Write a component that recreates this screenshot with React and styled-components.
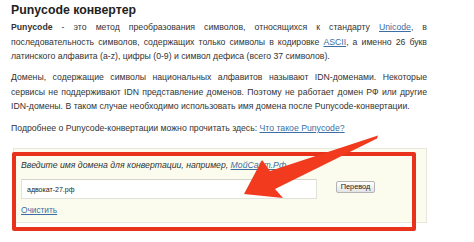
import React from "react";
import styled, { createGlobalStyle } from "styled-components";

const Global = createGlobalStyle`
  html, body { margin: 0; padding: 0; background: #fff; }
  body { font-family: "Liberation Sans", Arial, sans-serif; color: #333; }
`;

const Page = styled.div`
  position: relative;
  width: 474px;
  height: 242px;
  overflow: hidden;
  padding: 2px 47px 0 11px;
  box-sizing: border-box;
`;

const Title = styled.h1`
  margin: 0 0 1px;
  font-size: 12.3px;
  line-height: 17px;
  font-weight: bold;
  color: #222;
`;

const Para = styled.p`
  margin: 0 0 ${(p) => p.$gap ?? 6.5}px;
  font-size: 8.7px;
  line-height: 14.5px;
  text-align: justify;
  color: #333;
`;

const Link = styled.a`
  color: #3c6ea3;
  text-decoration: underline;
`;

const FormBox = styled.div`
  margin: 12px 0 0 2px;
  width: 414px;
  height: 75px;
  box-sizing: border-box;
  background: #fcfcee;
  border: 1px solid #e6e6dc;
  padding: 10px 0 0 7px;
`;

const Hint = styled.div`
  font-size: 8.7px;
  font-style: italic;
  color: #333;
  line-height: 12px;
`;

const Row = styled.div`
  display: flex;
  align-items: center;
  margin-top: 8px;
`;

const Input = styled.div`
  width: 296px;
  height: 20px;
  box-sizing: border-box;
  background: #fff;
  border: 1px solid #e2e2da;
  border-top-color: #d4d4cc;
  font-size: 7px;
  line-height: 19px;
  padding-left: 5px;
  color: #222;
`;

const Button = styled.div`
  margin: 0 0 3px 19px;
  width: 39px;
  height: 12px;
  box-sizing: border-box;
  border: 1px solid #b5b5b5;
  border-radius: 2px;
  background: linear-gradient(#ffffff, #e4e4e4);
  font-size: 7.4px;
  line-height: 10px;
  text-align: center;
  color: #222;
`;

const Clear = styled(Link)`
  display: inline-block;
  margin-top: 3.5px;
  font-size: 8.3px;
  line-height: 11px;
`;

const RedFrame = styled.div`
  position: absolute;
  left: 12px;
  top: 152px;
  width: 404px;
  height: 79px;
  box-sizing: border-box;
  border: 4.5px solid #e8321c;
  border-radius: 2px;
  pointer-events: none;
`;

const Arrow = styled.svg`
  position: absolute;
  left: 0;
  top: 0;
  pointer-events: none;
`;

export default function App() {
  return (
    <>
      <Global />
      <Page>
        <Title>Punycode конвертер</Title>
        <Para>
          <b>Punycode</b> - это метод преобразования символов, относящихся к стандарту{" "}
          <Link>Unicode</Link>, в последовательность символов, содержащих только символы в
          кодировке <Link>ASCII</Link>, а именно 26 букв латинского алфавита (a-z), цифры (0-9) и
          символ дефиса (всего 37 символов).
        </Para>
        <Para $gap={7.5}>
          Домены, содержащие символы национальных алфавитов называют IDN-доменами. Некоторые
          сервисы не поддерживают IDN представление доменов. Поэтому не работает домен РФ или другие
          IDN-домены. В таком случае необходимо использовать имя домена после Punycode-конвертации.
        </Para>
        <Para $gap={0}>
          Подробнее о Punycode-конвертации можно прочитать здесь: <Link>Что такое Punycode?</Link>
        </Para>
        <FormBox>
          <Hint>
            Введите имя домена для конвертации, например, <Link>МойСайт.Рф</Link>
          </Hint>
          <Row>
            <Input>адвокат-27.рф</Input>
            <Button>Перевод</Button>
          </Row>
          <Clear>Очистить</Clear>
        </FormBox>
        <RedFrame />
        <Arrow width="474" height="242" viewBox="0 0 474 242">
          <polygon
            points="378,135.5 377,138.5 275,189 283,198 244,194 262,160 270,171"
            fill="#f23a1f"
          />
        </Arrow>
      </Page>
    </>
  );
}
